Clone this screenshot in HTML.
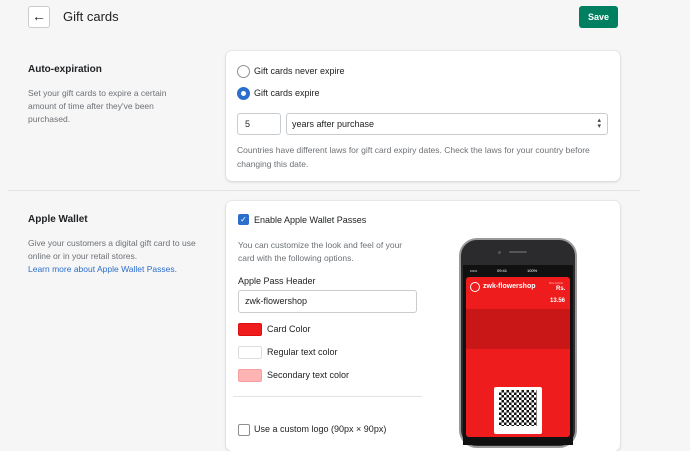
<!DOCTYPE html>
<html><head><style>
*{margin:0;padding:0;box-sizing:border-box}
body{width:690px;height:439px;overflow:hidden;background:#f6f6f7;font-family:"Liberation Sans",sans-serif;color:#202223;position:relative;font-size:9.5px}
.a{position:absolute}
.card{position:absolute;background:#fff;border-radius:6px;box-shadow:0 0 0 1px rgba(63,63,68,.05),0 1px 3px rgba(63,63,68,.15)}
.g{color:#6d7175}
.rad{position:absolute;width:13px;height:13px;border-radius:50%;border:1.5px solid #8c9196;background:#fff}
.sw{position:absolute;width:24px;height:13px;border-radius:2px;border:1px solid #ddd}
</style></head><body>
<div class="a" style="left:28px;top:6px;width:22px;height:22px;border:1px solid #c9cccf;border-radius:3px;background:#fff;font-size:14px;text-align:center;line-height:19px">←</div>
<div class="a" style="left:63px;top:9px;font-size:13px;">Gift cards</div>
<div class="a" style="left:579px;top:6px;width:39px;height:22px;background:#008060;border-radius:3px;color:#fff;font-size:9px;font-weight:bold;text-align:center;line-height:22px">Save</div>

<div class="a" style="left:28px;top:64px;font-size:10px;font-weight:bold">Auto-expiration</div>
<div class="a g" style="left:28px;top:87px;width:150px;line-height:13px;font-size:8.5px">Set your gift cards to expire a certain amount of time after they've been purchased.</div>

<div class="card" style="left:226px;top:51px;width:394px;height:130px"></div>
<div class="rad" style="left:237px;top:65px"></div>
<div class="a" style="left:254px;top:66px;font-size:9px">Gift cards never expire</div>
<div class="rad" style="left:237px;top:87px;border:4px solid #2c6ecb"></div>
<div class="a" style="left:254px;top:88px;font-size:9px">Gift cards expire</div>
<div class="a" style="left:237px;top:113px;width:44px;height:22px;border:1px solid #c9cccf;border-radius:3px;background:#fff;padding:5px 7px;font-size:9px">5</div>
<div class="a" style="left:286px;top:113px;width:322px;height:22px;border:1px solid #c9cccf;border-radius:3px;background:#fff;padding:5px 5px;font-size:9px">years after purchase<span style="position:absolute;right:6px;top:4px;font-size:7px;line-height:6px;color:#444">▴<br>▾</span></div>
<div class="a g" style="left:237px;top:143px;width:380px;line-height:14px;font-size:8.5px">Countries have different laws for gift card expiry dates. Check the laws for your country before changing this date.</div>

<div class="a" style="left:8px;top:190px;width:632px;height:1px;background:#e1e3e5"></div>

<div class="a" style="left:28px;top:214px;font-size:10px;font-weight:bold">Apple Wallet</div>
<div class="a g" style="left:28px;top:237px;width:170px;line-height:13px;font-size:8.5px">Give your customers a digital gift card to use online or in your retail stores.<br><span style="color:#2c6ecb">Learn more about Apple Wallet Passes.</span></div>

<div class="card" style="left:226px;top:201px;width:394px;height:250px"></div>
<div class="a" style="left:238px;top:214px;width:11px;height:11px;border-radius:2px;background:#2c6ecb;color:#fff;font-size:8px;text-align:center;line-height:11px">✓</div>
<div class="a" style="left:254px;top:215px;font-size:9px">Enable Apple Wallet Passes</div>
<div class="a g" style="left:238px;top:239px;width:180px;line-height:13px;font-size:8.5px">You can customize the look and feel of your card with the following options.</div>
<div class="a" style="left:238px;top:276px;font-size:9px">Apple Pass Header</div>
<div class="a" style="left:238px;top:290px;width:179px;height:23px;border:1px solid #c9cccf;border-radius:3px;padding:5px 6px;font-size:9px">zwk-flowershop</div>
<div class="sw" style="left:238px;top:323px;background:#ee1c1c;border-color:#d11"></div>
<div class="a" style="left:267px;top:324px;font-size:9px">Card Color</div>
<div class="sw" style="left:238px;top:346px;background:#fff"></div>
<div class="a" style="left:267px;top:347px;font-size:9px">Regular text color</div>
<div class="sw" style="left:238px;top:369px;background:#ffb3b3;border-color:#f3a0a0"></div>
<div class="a" style="left:267px;top:370px;font-size:9px">Secondary text color</div>
<div class="a" style="left:233px;top:396px;width:189px;height:1px;background:#e1e3e5"></div>
<div class="a" style="left:238px;top:424px;width:12px;height:12px;border-radius:2px;border:1.5px solid #8c9196"></div>
<div class="a" style="left:254px;top:424px;font-size:9px">Use a custom logo (90px × 90px)</div>

<!-- phone -->
<div class="a" style="left:459px;top:238px;width:118px;height:210px;background:#2b2b2d;border-radius:18px;border:2px solid #9a9a9c"></div>
<div class="a" style="left:509px;top:251px;width:18px;height:2px;background:#555;border-radius:1px"></div>
<div class="a" style="left:498px;top:251px;width:3px;height:3px;background:#555;border-radius:50%"></div>
<div class="a" style="left:463px;top:265px;width:110px;height:180px;background:#111"></div>
<div class="a" style="left:470px;top:268px;color:#fff;font-size:4px">•••••　　　　　09:41　　　　　100%</div>
<div class="a" style="left:466px;top:277px;width:104px;height:160px;background:#ee1c1c;border-radius:3px"></div>
<div class="a" style="left:466px;top:309px;width:104px;height:40px;background:#c91717"></div>
<div class="a" style="left:470px;top:282px;width:10px;height:10px;border-radius:50%;border:1px solid #fff"></div>
<div class="a" style="left:483px;top:283px;color:#fff;font-size:7px;font-weight:bold">zwk-flowershop</div>
<div class="a" style="left:549px;top:281px;color:#ffb3b3;font-size:3px">BALANCE</div>
<div class="a" style="left:556px;top:286px;color:#fff;font-size:6px;font-weight:bold">Rs.</div>
<div class="a" style="left:550px;top:298px;color:#fff;font-size:6px;font-weight:bold">13.56</div>
<div class="a" style="left:494px;top:387px;width:48px;height:47px;background:#fff;border-radius:2px"></div>
<div class="a" style="left:499px;top:390px;width:38px;height:36px;background:repeating-conic-gradient(#111 0 25%,#fff 0 50%) 0 0/5px 5px"></div>
</body></html>
